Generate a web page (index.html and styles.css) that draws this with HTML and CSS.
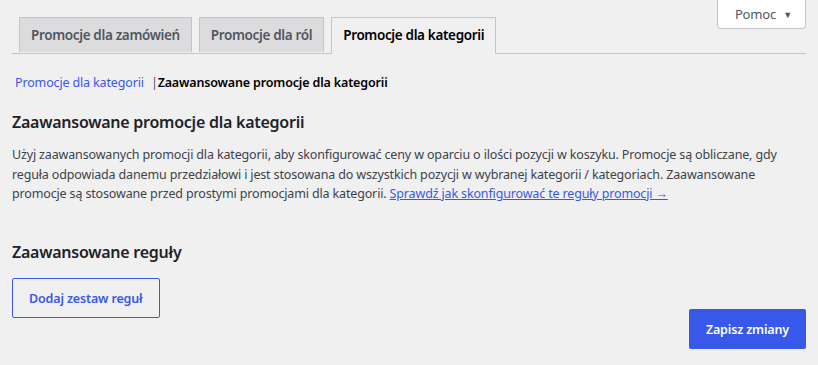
FILE: index.html
```html
<!DOCTYPE html>
<html lang="pl">
<head>
    <meta charset="UTF-8">
    <title>Promocje dla kategorii</title>
    <link rel="stylesheet" href="styles.css">
</head>
<body>
    <div class="help-bar">
        <button class="help-btn">Pomoc <span class="arrow">&#9660;</span></button>
    </div>

    <div class="wrap">
        <nav class="tabs">
            <a href="#" class="tab">Promocje dla zamówień</a>
            <a href="#" class="tab">Promocje dla ról</a>
            <a href="#" class="tab active">Promocje dla kategorii</a>
        </nav>

        <ul class="subsub">
            <li><a href="#">Promocje dla kategorii</a> |</li>
            <li class="current">Zaawansowane promocje dla kategorii</li>
        </ul>

        <h2>Zaawansowane promocje dla kategorii</h2>
        <p class="desc">Użyj zaawansowanych promocji dla kategorii, aby skonfigurować ceny w oparciu o ilości pozycji w koszyku. Promocje są obliczane, gdy reguła odpowiada danemu przedziałowi i jest stosowana do wszystkich pozycji w wybranej kategorii / kategoriach. Zaawansowane promocje są stosowane przed prostymi promocjami dla kategorii. <a href="#">Sprawdź jak skonfigurować te reguły promocji &rarr;</a></p>

        <h2 class="rules-title">Zaawansowane reguły</h2>
        <button class="btn-outline">Dodaj zestaw reguł</button>

        <div class="footer">
            <button class="btn-primary">Zapisz zmiany</button>
        </div>
    </div>
</body>
</html>
```

FILE: styles.css
```css
body {
    margin: 0;
    background: #f0f0f1;
    color: #3c434a;
    font-family: "Noto Sans", "Open Sans", sans-serif;
    font-size: 12.5px;
    letter-spacing: -0.15px;
    line-height: 1.5;
}

a {
    color: #3858e9;
}

.help-bar {
    display: flex;
    justify-content: flex-end;
    padding-right: 12px;
    height: 30px;
}
.help-btn {
    width: 89px;
    height: 29px;
    background: #fff;
    border: 1px solid #c3c4c7;
    border-top: none;
    border-radius: 0 0 4px 4px;
    color: #50575e;
    font-family: inherit;
    font-size: 13px;
    letter-spacing: -0.15px;
    padding: 0 0 1px 4px;
}
.help-btn .arrow {
    font-size: 9px;
    margin-left: 4px;
    vertical-align: 1px;
}

.wrap {
    margin: 0 12px;
}

.tabs {
    display: flex;
    gap: 7px;
    padding-left: 7px;
    margin-top: -13px;
    border-bottom: 1px solid #c3c4c7;
}
.tab {
    display: block;
    padding: 0 11px;
    height: 34px;
    line-height: 35px;
    margin-bottom: -1px;
    background: #dcdcde;
    border: 1px solid #c3c4c7;
    border-bottom: none;
    color: #50575e;
    font-size: 13.5px;
    letter-spacing: -0.35px;
    font-weight: 600;
    text-decoration: none;
}
.tab.active {
    background: #f0f0f1;
    color: #000;
    height: 35px;
    border-bottom: 1px solid #f0f0f1;
}

.subsub {
    list-style: none;
    margin: 20px 0 0;
    padding: 0 0 0 3px;
    display: flex;
    color: #50575e;
}
.subsub a {
    text-decoration: none;
    margin-right: 4px;
}
.subsub .current {
    color: #000;
    font-weight: 600;
}

h2 {
    margin: 18px 0 0;
    color: #1d2327;
    font-size: 16px;
    letter-spacing: -0.25px;
    font-weight: 600;
    line-height: 1.4;
}

.desc {
    margin: 12px 0 0;
    line-height: 19.5px;
}

.rules-title {
    margin-top: 37px;
}

.btn-outline {
    margin-top: 15px;
    height: 40px;
    padding: 0 16px;
    background: transparent;
    border: 1px solid #3858e9;
    border-radius: 2px;
    color: #3858e9;
    font-family: inherit;
    font-size: 12.5px;
    letter-spacing: -0.15px;
    font-weight: 600;
}

.footer {
    display: flex;
    justify-content: flex-end;
    margin-top: -9px;
}
.btn-primary {
    height: 40px;
    padding: 0 17px;
    background: #3858e9;
    border: none;
    border-radius: 2px;
    color: #fff;
    font-family: inherit;
    font-size: 12.5px;
    letter-spacing: -0.15px;
    font-weight: 600;
}
```
